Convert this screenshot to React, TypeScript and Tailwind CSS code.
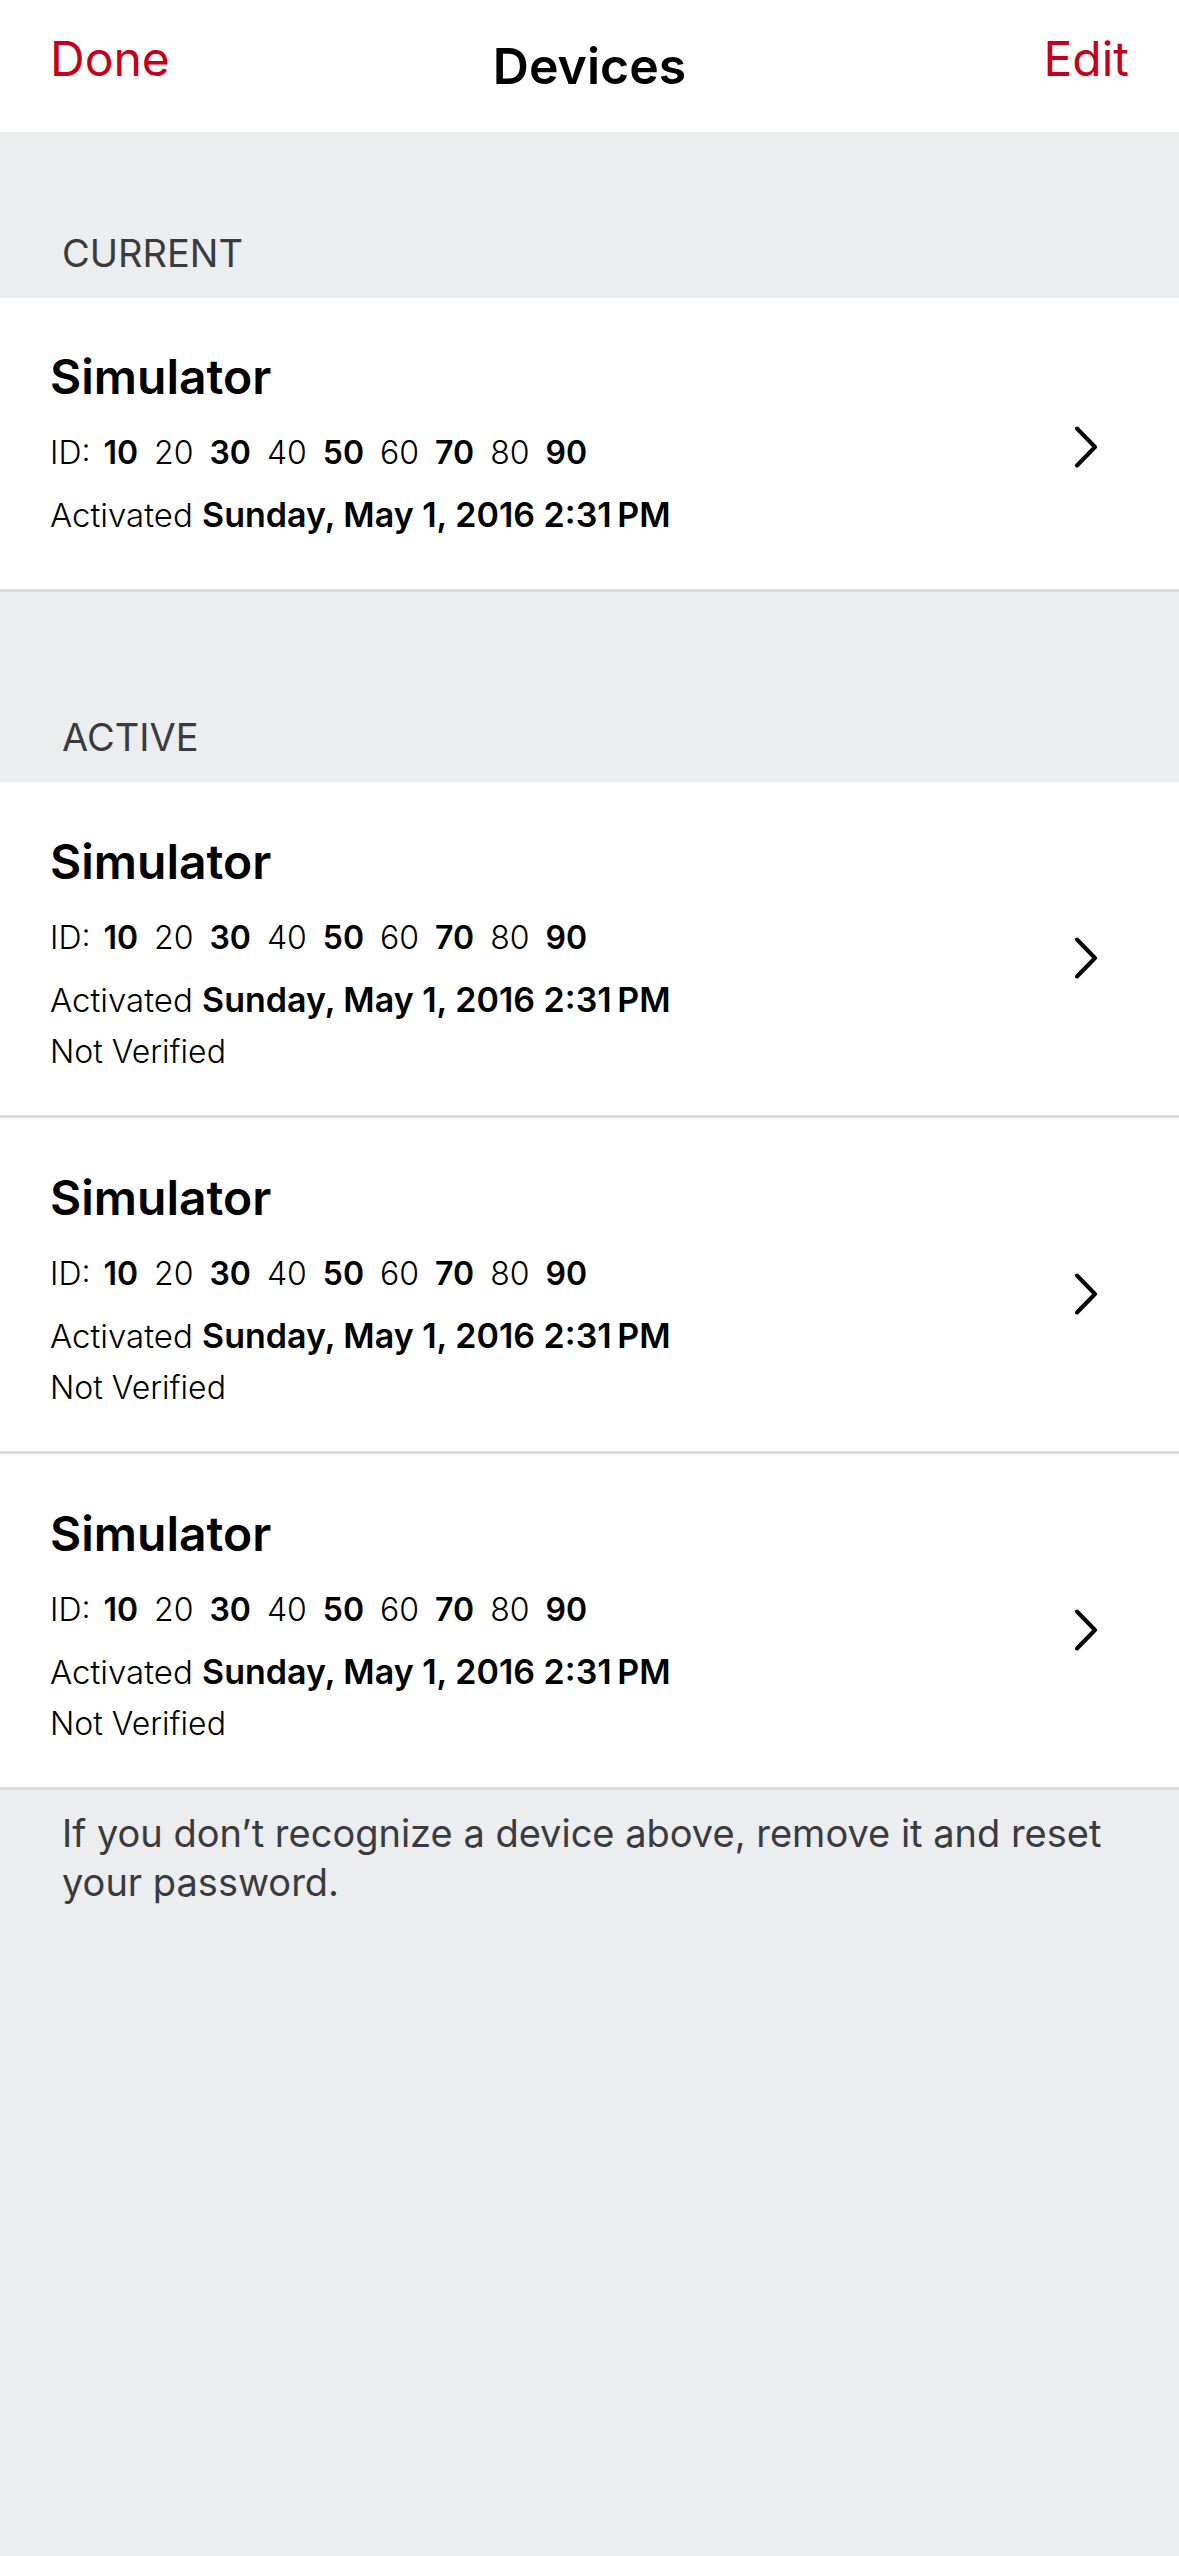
import React from 'react';

const font = { fontFamily: 'Inter, "Noto Sans", sans-serif' };

const idParts = ['10', '20', '30', '40', '50', '60', '70', '80', '90'];

type Device = { name: string; verified: boolean };

const current: Device[] = [{ name: 'Simulator', verified: true }];
const active: Device[] = [
  { name: 'Simulator', verified: false },
  { name: 'Simulator', verified: false },
  { name: 'Simulator', verified: false },
];

const Chevron = () => (
  <svg width="24" height="42" viewBox="0 0 24 42" fill="none">
    <path d="M3 2.5 L21 21 L3 39.5" stroke="#000" strokeWidth="4" strokeLinecap="round" strokeLinejoin="round" />
  </svg>
);

const DeviceRow = ({ device }: { device: Device }) => (
  <div
    className={`flex items-center justify-between bg-white pl-[50px] pr-[81px] border-b-[3px] border-[#dcdde0] ${
      device.verified ? 'pt-[55px] pb-[48px]' : 'pt-[56px] pb-[38px]'
    }`}
  >
    <div className="flex flex-col text-black">
      <div className="text-[48px] leading-[48px] font-semibold">{device.name}</div>
      <div className="mt-[21px] flex items-baseline gap-[16px] text-[32px] leading-[62px] font-light">
        <span className="mr-[-3px]">ID:</span>
        {idParts.map((p, i) => (
          <span key={p} className={i % 2 === 0 ? 'font-semibold' : 'font-light'}>
            {p}
          </span>
        ))}
      </div>
      <div className="mt-[5px] text-[33px] leading-[52px] font-light whitespace-nowrap">
        Activated <span className="text-[34px] font-semibold">Sunday, May 1, 2016 2:31&#8201;PM</span>
      </div>
      {!device.verified && (
        <div className="text-[32px] leading-[51px] font-light">Not Verified</div>
      )}
    </div>
    <Chevron />
  </div>
);

const SectionHeader = ({ title, height }: { title: string; height: string }) => (
  <div className={`flex items-end px-[62px] pb-[26px] text-[38px] leading-[38px] text-[#3a3b40] ${height}`}>
    {title}
  </div>
);

export default function App() {
  return (
    <div className="min-h-[2556px] w-full bg-[#ecedef]" style={font}>
      <div className="grid h-[132px] grid-cols-[1fr_auto_1fr] items-start bg-white px-[50px]">
        <div className="mt-[35px] text-[48px] leading-[48px] text-[#c70019]">Done</div>
        <div className="mt-[41px] text-[50px] leading-[51px] font-semibold text-black">Devices</div>
        <div className="mt-[35px] text-right text-[48px] leading-[48px] text-[#c70019]">Edit</div>
      </div>

      <SectionHeader title="CURRENT" height="h-[166px]" />
      {current.map((d, i) => (
        <DeviceRow key={i} device={d} />
      ))}

      <SectionHeader title="ACTIVE" height="h-[190px]" />
      {active.map((d, i) => (
        <DeviceRow key={i} device={d} />
      ))}

      <div className="px-[62px] pt-[19px] text-[38px] leading-[49px] text-[#3a3b40]">
        If you don’t recognize a device above, remove it and reset your password.
      </div>
    </div>
  );
}
